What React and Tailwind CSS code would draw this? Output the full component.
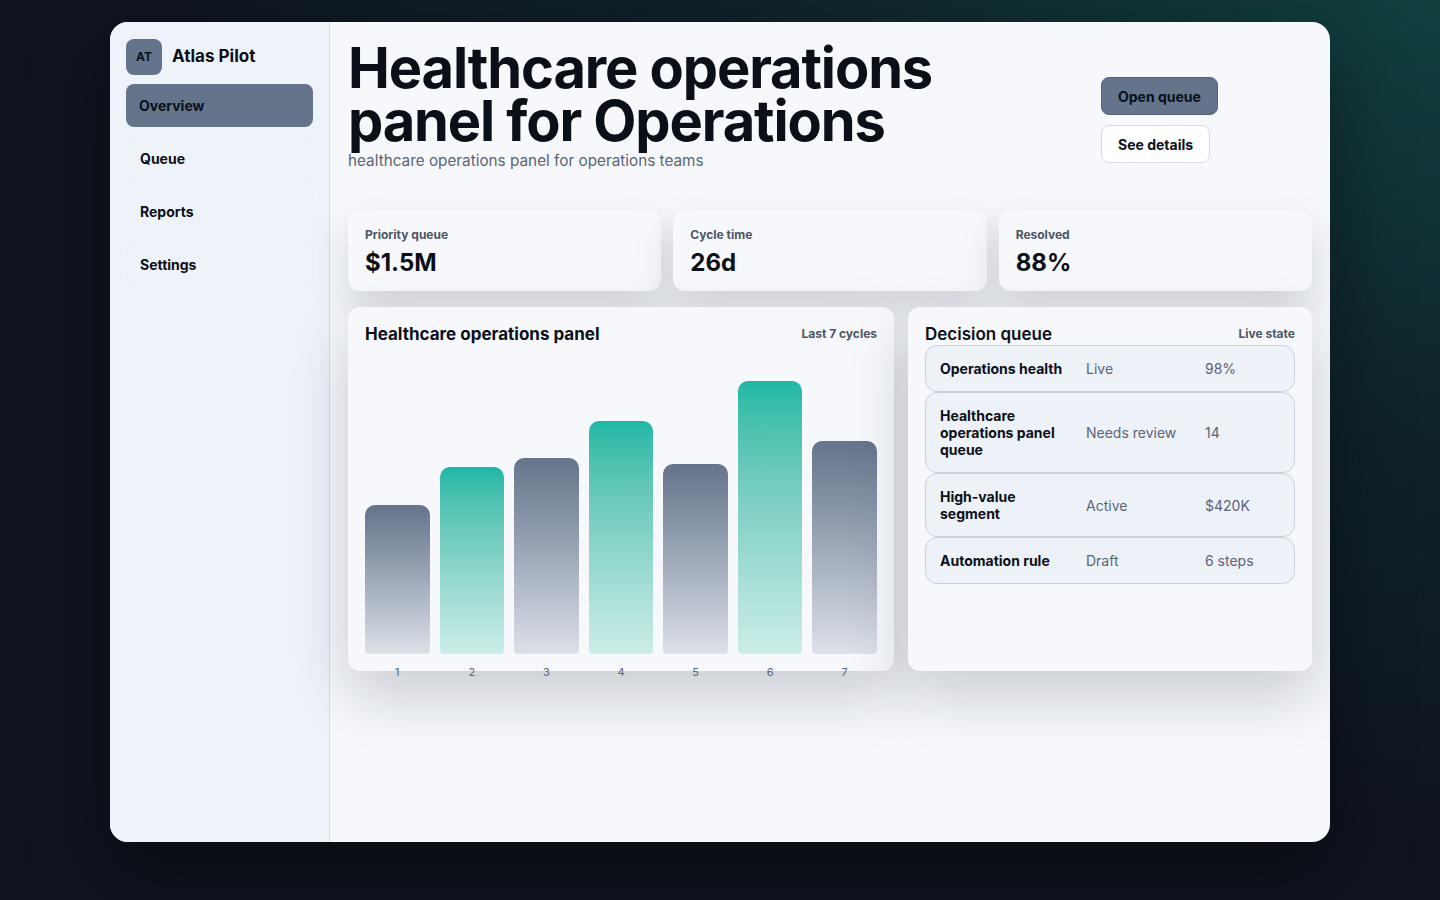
import React from 'react';

const navItems = ['Overview', 'Queue', 'Reports', 'Settings'];

const stats = [
  { label: 'Priority queue', value: '$1.5M' },
  { label: 'Cycle time', value: '26d' },
  { label: 'Resolved', value: '88%' },
];

// bar heights in px, accent = teal bars
const bars = [
  { label: '1', height: 149, accent: false },
  { label: '2', height: 187, accent: true },
  { label: '3', height: 196, accent: false },
  { label: '4', height: 233, accent: true },
  { label: '5', height: 190, accent: false },
  { label: '6', height: 273, accent: true },
  { label: '7', height: 213, accent: false },
];

const queue = [
  { name: 'Operations health', status: 'Live', value: '98%' },
  { name: 'Healthcare operations panel queue', status: 'Needs review', value: '14' },
  { name: 'High-value segment', status: 'Active', value: '$420K' },
  { name: 'Automation rule', status: 'Draft', value: '6 steps' },
];

const Sidebar = () => (
  <aside className="w-[220px] shrink-0 bg-[#eef2f9] border-r border-[#d5dbe5] px-4 pt-[17px]">
    <div className="flex items-center gap-[10px]">
      <div className="w-9 h-9 rounded-lg bg-[#64748b] flex items-center justify-center text-[12px] font-bold text-[#0b0f17]">
        AT
      </div>
      <span className="text-[17px] font-bold text-[#0b0f17]">Atlas Pilot</span>
    </div>
    <nav className="mt-[9px] flex flex-col gap-[10px]">
      {navItems.map((item, i) => (
        <div
          key={item}
          className={
            i === 0
              ? 'h-[43px] flex items-center px-[13px] rounded-lg bg-[#64748b] text-[14px] font-bold text-[#0b0f17]'
              : 'h-[43px] flex items-center px-[13px] rounded-lg border border-[#eaeef6] text-[14px] font-bold text-[#0b0f17]'
          }
        >
          {item}
        </div>
      ))}
    </nav>
  </aside>
);

const Header = () => (
  <header className="flex">
    <div className="flex-1">
      <h1 className="text-[56px] leading-[53px] font-bold tracking-[-0.02em] text-[#0b0f17] pt-[18px]">
        Healthcare operations
        <br />
        panel for Operations
      </h1>
      <p className="text-[15.3px] leading-[20px] text-[#5b6577] mt-[3px]">
        healthcare operations panel for operations teams
      </p>
    </div>
    <div className="w-[211px] pt-[53px] flex flex-col items-start gap-[10px]">
      <button className="h-[38px] px-4 rounded-lg bg-[#64748b] border border-[#55627a] text-[14px] font-bold text-[#0b0f17]">
        Open queue
      </button>
      <button className="h-[38px] px-4 rounded-lg bg-white border border-[#d5dbe5] text-[14px] font-bold text-[#0b0f17]">
        See details
      </button>
    </div>
  </header>
);

const StatCard = ({ label, value }) => (
  <div className="h-[81px] rounded-xl bg-[#f7f8fb] px-[17px] pt-[17px] shadow-[0_18px_40px_rgba(15,23,42,0.16)]">
    <div className="text-[12px] font-bold text-[#4b5565] leading-4">{label}</div>
    <div className="mt-[4px] text-[24px] font-bold text-[#0b0f17] leading-8">{value}</div>
  </div>
);

const ChartPanel = () => (
  <div className="h-[364px] rounded-xl bg-[#f6f8fb] px-[17px] pt-[16px] shadow-[0_24px_60px_rgba(15,23,42,0.2)]">
    <div className="flex items-center justify-between">
      <h2 className="text-[17px] font-bold text-[#0b0f17] leading-[22px]">Healthcare operations panel</h2>
      <span className="text-[12px] font-bold text-[#4b5565]">Last 7 cycles</span>
    </div>
    <div className="mt-[11px] h-[298px] grid grid-cols-7 gap-[10px] items-end">
      {bars.map((bar) => (
        <div
          key={bar.label}
          className={
            bar.accent
              ? 'rounded-t-[10px] rounded-b-[4px] bg-gradient-to-b from-[#19b8a5] to-[#cbede9]'
              : 'rounded-t-[10px] rounded-b-[4px] bg-gradient-to-b from-[#64748b] to-[#dde1e9]'
          }
          style={{ height: bar.height }}
        />
      ))}
    </div>
    <div className="mt-[10px] grid grid-cols-7 gap-[10px]">
      {bars.map((bar) => (
        <div key={bar.label} className="text-center text-[11px] text-[#5b6577] leading-4">
          {bar.label}
        </div>
      ))}
    </div>
  </div>
);

const QueuePanel = () => (
  <div className="h-[364px] rounded-xl bg-[#f6f8fb] px-[17px] pt-[16px] shadow-[0_24px_60px_rgba(15,23,42,0.2)]">
    <div className="flex items-center justify-between">
      <h2 className="text-[17px] font-semibold text-[#0b0f17] leading-[22px]">Decision queue</h2>
      <span className="text-[12px] font-bold text-[#4b5565]">Live state</span>
    </div>
    <div className="flex flex-col">
      {queue.map((row) => (
        <div
          key={row.name}
          className="grid grid-cols-[146px_119px_1fr] items-center px-[14px] py-[14px] rounded-xl bg-[#edf1f8] border border-[#c9d1de] text-[14px] leading-[17px]"
        >
          <span className="font-bold text-[#0b0f17] pr-2">{row.name}</span>
          <span className="text-[#5b6577]">{row.status}</span>
          <span className="text-[#5b6577]">{row.value}</span>
        </div>
      ))}
    </div>
  </div>
);

export default function App() {
  return (
    <div
      className="min-h-screen bg-[#0f141f] bg-[radial-gradient(ellipse_at_top_right,#11403f_0%,#0f222a_35%,#0f141f_65%)] flex justify-center pt-[22px]"
      style={{ fontFamily: 'Inter, "Noto Sans", sans-serif' }}
    >
      <div className="w-[1220px] h-[820px] rounded-[18px] overflow-hidden flex bg-[#f6f8fb] shadow-[0_30px_80px_rgba(0,0,0,0.45)]">
        <Sidebar />
        <main className="flex-1 px-[18px] pt-[2px]">
          <Header />
          <div className="mt-[39px] grid grid-cols-3 gap-3">
            {stats.map((s) => (
              <StatCard key={s.label} {...s} />
            ))}
          </div>
          <div className="mt-4 grid grid-cols-[546px_1fr] gap-[14px]">
            <ChartPanel />
            <QueuePanel />
          </div>
        </main>
      </div>
    </div>
  );
}
